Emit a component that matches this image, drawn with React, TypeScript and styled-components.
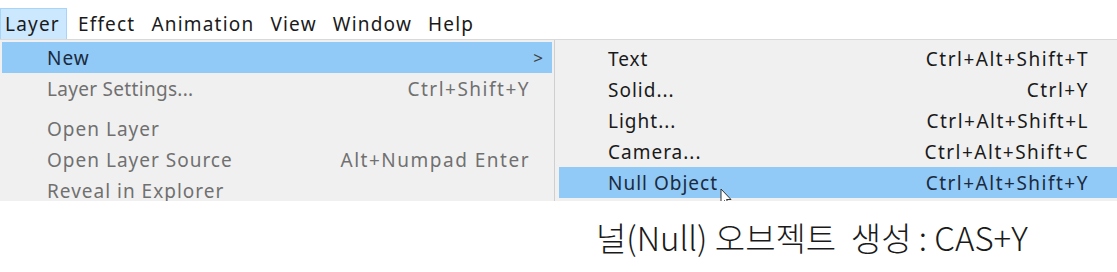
import React from 'react'
import styled, { createGlobalStyle } from 'styled-components'

const GlobalStyle = createGlobalStyle`
	html, body {
		margin: 0;
		padding: 0;
		background: #ffffff;
	}
	body {
		font-family: 'Noto Sans', 'Open Sans', sans-serif;
		overflow: hidden;
	}
`

const Page = styled.div`
	width: 1117px;
	height: 272px;
	padding-top: 8px;
	box-sizing: border-box;
`

const MenuBar = styled.div`
	display: flex;
	height: 31px;
	align-items: stretch;
	background: #ffffff;
`

const BarItem = styled.div<{ $active?: boolean }>`
	display: flex;
	align-items: center;
	padding: 0 6px 0 4px;
	margin-right: ${p => (p.$active ? '6px' : '4px')};
	font-size: 19px;
	letter-spacing: 1.2px;
	color: #1a1a1a;
	box-sizing: border-box;
	background: ${p => (p.$active ? '#cce8ff' : 'transparent')};
	border: 1px solid ${p => (p.$active ? '#a8d4f7' : 'transparent')};
	border-bottom: none;
`

const Panels = styled.div`
	display: flex;
	height: 161px;
	border-top: 1px solid #d9d9d9;
	overflow: hidden;
`

const Menu = styled.div<{ $width?: number }>`
	flex: ${p => (p.$width ? `0 0 ${p.$width}px` : '1 1 auto')};
	background: #f0f0f0;
	padding: 2px 2px 0 2px;
	box-sizing: border-box;
	border-right: 1px solid #cfcfcf;
	display: flex;
	flex-direction: column;
`

const SubMenu = styled(Menu)`
	padding: 3px 0 0 4px;
	border-right: none;
`

const Row = styled.div<{ $selected?: boolean; $disabled?: boolean; $textLeft: number; $right: number }>`
	flex: 0 0 31px;
	display: flex;
	align-items: center;
	justify-content: space-between;
	padding: 0 ${p => p.$right}px 0 ${p => p.$textLeft}px;
	font-size: 19px;
	letter-spacing: 1px;
	background: ${p => (p.$selected ? '#91c9f7' : 'transparent')};
	color: ${p => (p.$disabled ? '#707070' : p.$selected ? '#1b2a3d' : '#1a1a1a')};
	white-space: nowrap;
	position: relative;
`

const Label = styled.span<{ $tight?: boolean }>`
	letter-spacing: ${p => (p.$tight ? '0.3px' : '1px')};
`

const Shortcut = styled.span`
	letter-spacing: 1.5px;
`

const Arrow = styled.span`
	font-size: 17px;
	color: #404040;
`

const Separator = styled.div`
	height: 1px;
	background: #d2d2d2;
	margin: 4px 0 5px 38px;
`

const Caption = styled.div`
	padding: 12px 0 0 596px;
	font-family: 'Noto Sans CJK KR', 'Noto Sans', sans-serif;
	font-weight: 300;
	font-size: 33px;
	color: #1a1a1a;
	white-space: pre;
`

const Cursor = styled.svg`
	position: absolute;
	left: 161px;
	top: 21px;
`

const leftItems = [
	{ label: 'Layer Settings...', shortcut: 'Ctrl+Shift+Y', tight: true },
]

const lowerItems = [
	{ label: 'Open Layer', shortcut: '' },
	{ label: 'Open Layer Source', shortcut: 'Alt+Numpad Enter' },
	{ label: 'Reveal in Explorer', shortcut: '' },
]

const newItems = [
	{ label: 'Text', shortcut: 'Ctrl+Alt+Shift+T' },
	{ label: 'Solid...', shortcut: 'Ctrl+Y' },
	{ label: 'Light...', shortcut: 'Ctrl+Alt+Shift+L' },
	{ label: 'Camera...', shortcut: 'Ctrl+Alt+Shift+C' },
	{ label: 'Null Object', shortcut: 'Ctrl+Alt+Shift+Y' },
]

export default function App() {
	return (
		<Page>
			<GlobalStyle />
			<MenuBar>
				<BarItem $active>Layer</BarItem>
				<BarItem>Effect</BarItem>
				<BarItem>Animation</BarItem>
				<BarItem>View</BarItem>
				<BarItem>Window</BarItem>
				<BarItem>Help</BarItem>
			</MenuBar>
			<Panels>
				<Menu $width={555}>
					<Row $selected $textLeft={45} $right={8}>
						<Label>New</Label>
						<Arrow>&gt;</Arrow>
					</Row>
					{leftItems.map(i => (
						<Row key={i.label} $disabled $textLeft={45} $right={22}>
							<Label $tight={i.tight}>{i.label}</Label>
							<Shortcut>{i.shortcut}</Shortcut>
						</Row>
					))}
					<Separator />
					{lowerItems.map(i => (
						<Row key={i.label} $disabled $textLeft={45} $right={22}>
							<Label>{i.label}</Label>
							<Shortcut>{i.shortcut}</Shortcut>
						</Row>
					))}
				</Menu>
				<SubMenu>
					{newItems.map((i, idx) => {
						const selected = idx === newItems.length - 1
						return (
							<Row key={i.label} $selected={selected} $textLeft={49} $right={28}>
								<Label>{i.label}</Label>
								<Shortcut>{i.shortcut}</Shortcut>
								{selected && (
									<Cursor width="14" height="20" viewBox="0 0 14 20">
										<path d="M1 1 L1 16 L4.5 12.5 L7 18 L9 17 L6.5 11.5 L11 11.5 Z" fill="#ffffff" stroke="#333333" strokeWidth="1" />
									</Cursor>
								)}
							</Row>
						)
					})}
				</SubMenu>
			</Panels>
			<Caption>{'널(Null) 오브젝트  생성 : CAS+Y'}</Caption>
		</Page>
	)
}
